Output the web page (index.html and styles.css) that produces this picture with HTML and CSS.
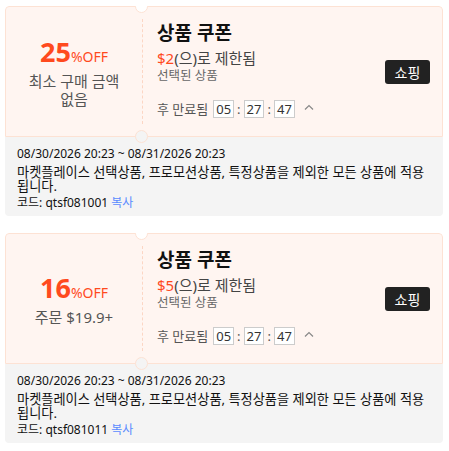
FILE: index.html
```html
<!DOCTYPE html>
<html lang="ko">
<head>
  <meta charset="UTF-8" />
  <meta name="viewport" content="width=device-width, initial-scale=1" />
  <title>쿠폰</title>
  <link rel="stylesheet" href="styles.css">
</head>
<body>
  <div class="coupon-card">
    <div class="coupon-top">
      <div class="coupon-left">
        <div class="discount"><span class="num">25</span><span class="unit">%OFF</span></div>
        <div class="condition">최소 구매 금액<br>없음</div>
      </div>
      <div class="divider"></div>
      <div class="coupon-right">
        <div class="info">
          <h3>상품 쿠폰</h3>
          <div class="limit"><span class="red">$2</span>(으)로 제한됨</div>
          <div class="scope">선택된 상품</div>
          <div class="timer">
            <span class="timer-label">후 만료됨</span>
            <span class="tbox">05</span><span class="colon">:</span>
            <span class="tbox">27</span><span class="colon">:</span>
            <span class="tbox">47</span>
            <svg class="caret" width="10" height="6" viewBox="0 0 10 6"><path d="M1 5.5 L5 1.5 L9 5.5" fill="none" stroke="#888" stroke-width="1.2"/></svg>
          </div>
        </div>
        <button class="shop-btn">쇼핑</button>
      </div>
    </div>
    <div class="coupon-detail">
      <div class="date">08/30/2026 20:23 ~ 08/31/2026 20:23</div>
      <div class="desc">마켓플레이스 선택상품, 프로모션상품, 특정상품을 제외한 모든 상품에 적용됩니다.</div>
      <div class="code">코드: qtsf081001 <a href="#" class="copy">복사</a></div>
    </div>
  </div>

  <div class="coupon-card">
    <div class="coupon-top">
      <div class="coupon-left">
        <div class="discount"><span class="num">16</span><span class="unit">%OFF</span></div>
        <div class="condition">주문 $19.9+</div>
      </div>
      <div class="divider"></div>
      <div class="coupon-right">
        <div class="info">
          <h3>상품 쿠폰</h3>
          <div class="limit"><span class="red">$5</span>(으)로 제한됨</div>
          <div class="scope">선택된 상품</div>
          <div class="timer">
            <span class="timer-label">후 만료됨</span>
            <span class="tbox">05</span><span class="colon">:</span>
            <span class="tbox">27</span><span class="colon">:</span>
            <span class="tbox">47</span>
            <svg class="caret" width="10" height="6" viewBox="0 0 10 6"><path d="M1 5.5 L5 1.5 L9 5.5" fill="none" stroke="#888" stroke-width="1.2"/></svg>
          </div>
        </div>
        <button class="shop-btn">쇼핑</button>
      </div>
    </div>
    <div class="coupon-detail">
      <div class="date">08/30/2026 20:23 ~ 08/31/2026 20:23</div>
      <div class="desc">마켓플레이스 선택상품, 프로모션상품, 특정상품을 제외한 모든 상품에 적용됩니다.</div>
      <div class="code">코드: qtsf081011 <a href="#" class="copy">복사</a></div>
    </div>
  </div>
</body>
</html>
```

FILE: styles.css
```css
* { box-sizing: border-box; }

body {
  margin: 0;
  padding: 6px 6px 0 5px;
  font-family: 'Noto Sans', 'Noto Sans CJK KR', sans-serif;
  background: #fff;
  color: #111;
}

.coupon-card {
  margin-bottom: 17px;
  border-radius: 4px;
  overflow: hidden;
}

.coupon-top {
  position: relative;
  display: flex;
  height: 131px;
  background: #fff5f1;
  border: 1px solid #fde2d4;
  border-radius: 4px 4px 0 0;
}

.coupon-left {
  position: relative;
  width: 136px;
  display: flex;
  flex-direction: column;
  align-items: center;
  justify-content: center;
  padding-top: 2px;
  text-align: center;
}

/* half circles cut out of the ticket */
.coupon-left::before,
.coupon-left::after {
  content: "";
  position: absolute;
  right: -6px;
  width: 11px;
  height: 11px;
  border-radius: 50%;
  border: 1px solid #fde2d4;
}

.coupon-left::before {
  top: -7px;
  background: #fff;
}

.coupon-left::after {
  bottom: -7px;
  background: #f4f4f4;
}

.discount {
  color: #ff4a1e;
  line-height: 30px;
}

.discount .num {
  font-size: 27px;
  font-weight: bold;
}

.discount .unit {
  font-size: 14px;
}

.condition {
  font-size: 15px;
  line-height: 18px;
  color: #555;
}

.divider {
  margin: 12px 0;
  border-left: 1px dashed #fcd6c4;
}

.coupon-right {
  flex: 1;
  display: flex;
  align-items: center;
  justify-content: space-between;
  padding: 0 12px 0 14px;
}

.info {
  align-self: flex-start;
  padding-top: 13px;
}

.info h3 {
  margin: 0;
  font-size: 19px;
  line-height: 26px;
  font-weight: bold;
  color: #111;
}

.limit {
  margin-top: 2px;
  font-size: 15px;
  line-height: 20px;
  color: #444;
}

.red { color: #ff4a1e; }

.scope {
  font-size: 12.5px;
  line-height: 16px;
  color: #666;
}

.timer {
  display: flex;
  align-items: center;
  margin-top: 15px;
  font-size: 13px;
  color: #555;
}

.timer-label {
  margin-right: 5px;
}

.tbox {
  display: inline-block;
  min-width: 19px;
  height: 18px;
  line-height: 16px;
  padding: 0 2px;
  text-align: center;
  border: 1px solid #ccc;
  background: #fff;
  color: #333;
  font-size: 13px;
}

.colon {
  margin: 0 3px;
}

.caret {
  margin-left: 9px;
  margin-bottom: 3px;
}

.shop-btn {
  margin-top: 1px;
  width: 45px;
  height: 24px;
  padding: 0;
  border: none;
  border-radius: 3px;
  background: #222;
  color: #fff;
  font-family: inherit;
  font-size: 14px;
  cursor: pointer;
}

.coupon-detail {
  padding: 8px 18px 6px 12px;
  background: #f4f4f4;
  font-size: 12px;
  color: #111;
}

.date {
  line-height: 18px;
}

.desc {
  margin-top: 2px;
  font-size: 13.2px;
  line-height: 14px;
}

.code {
  margin-top: 2px;
  line-height: 15px;
}

.copy {
  color: #5b8cff;
  text-decoration: none;
}
```
